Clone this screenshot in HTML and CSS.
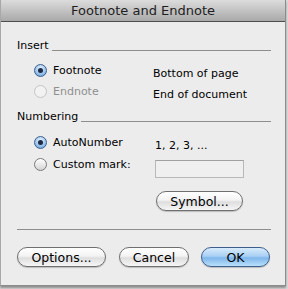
FILE: index.html
```html
<!DOCTYPE html>
<html lang="en">
<head>
    <meta charset="UTF-8">
    <title>Footnote and Endnote</title>
    <link rel="stylesheet" href="styles.css">
</head>
<body>
    <div class="window">
        <div class="title-bar">Footnote and Endnote</div>

        <div class="content">
            <div class="group-head">
                <span>Insert</span>
                <div class="rule"></div>
            </div>
            <div class="options">
                <label class="choice"><span class="radio on"></span>Footnote</label>
                <span class="hint">Bottom of page</span>
                <label class="choice disabled"><span class="radio"></span>Endnote</label>
                <span class="hint">End of document</span>
            </div>

            <div class="group-head">
                <span>Numbering</span>
                <div class="rule"></div>
            </div>
            <div class="options numbering">
                <label class="choice"><span class="radio on"></span>AutoNumber</label>
                <span class="hint">1, 2, 3, ...</span>
                <label class="choice"><span class="radio"></span>Custom mark:</label>
                <div class="mark-box">
                    <input type="text" class="mark-input" disabled>
                    <button class="btn symbol-btn">Symbol...</button>
                </div>
            </div>

            <div class="separator"></div>

            <div class="actions">
                <button class="btn options-btn">Options...</button>
                <button class="btn cancel-btn">Cancel</button>
                <button class="btn default ok-btn">OK</button>
            </div>
        </div>
    </div>
</body>
</html>
```

FILE: styles.css
```css
* {
    margin: 0;
    padding: 0;
    box-sizing: border-box;
    font-family: "DejaVu Sans", "Liberation Sans", sans-serif;
}

body {
    background: #dadada;
    width: 288px;
    height: 289px;
    overflow: hidden;
}

.window {
    width: 286px;
    height: 286px;
    background: #ececec;
    border-left: 1px solid #a8a8a8;
    border-right: 1px solid #8c8c8c;
    border-bottom: 1px solid #8c8c8c;
    box-shadow: 0 2px 2px rgba(0,0,0,0.35);
}

.title-bar {
    height: 22px;
    line-height: 21px;
    text-align: center;
    font-size: 13px;
    color: #1e1e1e;
    background: linear-gradient(#dcdcdc, #a9a9a9);
    border-bottom: 1px solid #4e4e4e;
}

.content {
    padding: 0 14px 0 16px;
    font-size: 11px;
    color: #000;
}

.group-head {
    display: flex;
    height: 16px;
    line-height: 16px;
    margin-top: 16px;
}

.options + .group-head {
    margin-top: 7px;
}

.rule {
    flex: 1;
    height: 13px;
    margin-left: 3px;
    border-bottom: 1px solid #8e8e8e;
}

.options {
    display: grid;
    grid-template-columns: 119px 1fr;
    grid-auto-rows: 21px;
    padding-left: 17px;
    margin-top: 6px;
}

.options.numbering {
    grid-template-columns: 121px 1fr;
    grid-auto-rows: auto;
    margin-top: 7px;
}

.options.numbering .choice {
    height: 21px;
}

.choice {
    display: flex;
    align-items: center;
    gap: 6px;
}

.choice.disabled {
    color: #8f8f8f;
}

.hint {
    padding-top: 6px;
    line-height: 16px;
}

.radio {
    width: 13px;
    height: 13px;
    border-radius: 50%;
    border: 1px solid #7a7a7a;
    background: linear-gradient(#ffffff, #d4d4d4);
    position: relative;
    flex-shrink: 0;
}

.radio.on {
    border-color: #3f5f8c;
    background: radial-gradient(circle at 50% 30%, #e4f1fc 0%, #9cc6ee 55%, #5c95d6 100%);
}

.radio.on::after {
    content: "";
    position: absolute;
    left: 3px;
    top: 3px;
    width: 5px;
    height: 5px;
    border-radius: 50%;
    background: #1e2a44;
}

.choice.disabled .radio {
    border-color: #c4c4c4;
    background: #f2f2f2;
}

.mark-box {
    display: flex;
    flex-direction: column;
    align-items: flex-start;
}

.mark-input {
    width: 89px;
    height: 18px;
    margin-top: 6px;
    background: #efefef;
    border: 1px solid #b8b8b8;
    border-top-color: #a0a0a0;
}

.btn {
    height: 20px;
    font-size: 12.5px;
    color: #000;
    border: 1px solid #6f6f6f;
    border-radius: 10px;
    background: linear-gradient(#ffffff 0%, #f3f3f3 45%, #dedede 55%, #f6f6f6 100%);
    box-shadow: 0 1px 1px rgba(0,0,0,0.2);
}

.symbol-btn {
    width: 87px;
    margin-top: 13px;
    margin-left: 1px;
}

.separator {
    height: 1px;
    margin-top: 18px;
    background: #8e8e8e;
}

.actions {
    display: flex;
    margin-top: 17px;
}

.options-btn {
    width: 89px;
}

.cancel-btn {
    width: 70px;
    margin-left: 13px;
}

.ok-btn {
    width: 69px;
    margin-left: 12px;
}

.btn.default {
    border-color: #3e5f8e;
    background: linear-gradient(#d9ebfb 0%, #a9d0f4 45%, #7fb6ec 55%, #b9e0fb 100%);
}
```
